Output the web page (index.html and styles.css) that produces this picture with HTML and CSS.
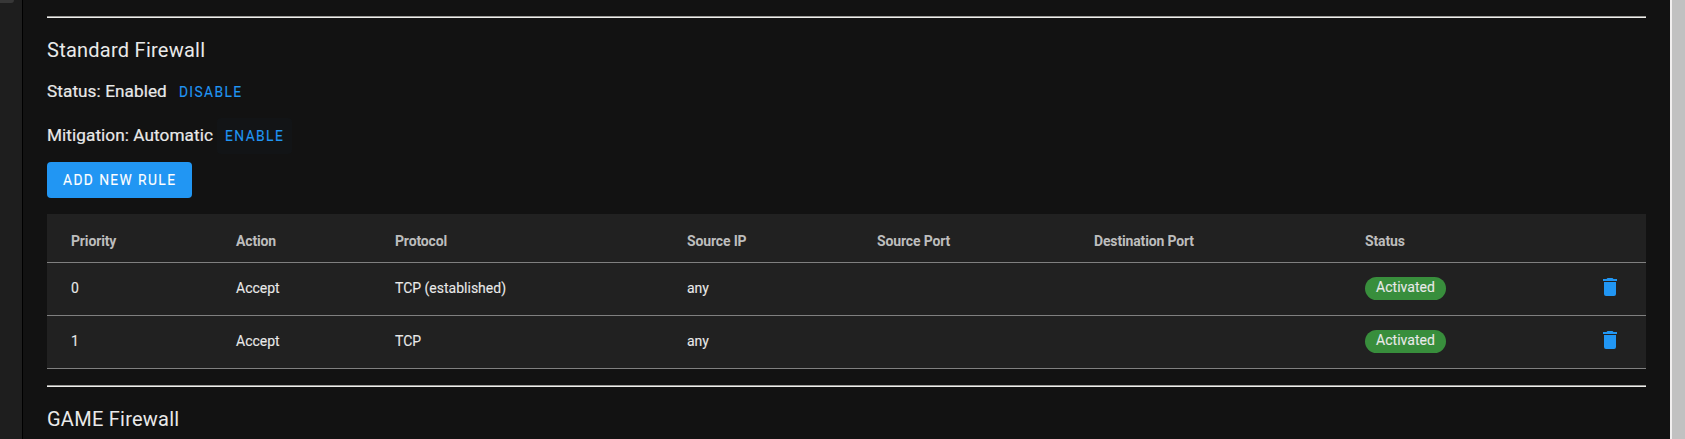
FILE: index.html
```html
<!DOCTYPE html>
<html lang="en">
<head>
<meta charset="utf-8">
<title>Firewall</title>
<link rel="stylesheet" href="styles.css">
</head>
<body>
<div class="app">
  <aside class="drawer"><div class="drawer-item"></div></aside>
  <main class="content">
    <hr class="divider">
    <h2 class="title">Standard Firewall</h2>
    <div class="setting"><span class="label">Status: Enabled</span><button class="btn btn-text">Disable</button></div>
    <div class="setting"><span class="label">Mitigation: Automatic</span><button class="btn btn-text active">Enable</button></div>
    <button class="btn btn-primary">Add new rule</button>
    <table class="rules">
      <colgroup><col class="c-priority"><col class="c-action"><col class="c-protocol"><col class="c-ip"><col class="c-sport"><col class="c-dport"><col class="c-status"></colgroup>
      <thead>
        <tr><th>Priority</th><th>Action</th><th>Protocol</th><th>Source IP</th><th>Source Port</th><th>Destination Port</th><th colspan="2">Status</th></tr>
      </thead>
      <tbody>
        <tr><td>0</td><td>Accept</td><td>TCP (established)</td><td>any</td><td></td><td></td><td><span class="chip">Activated</span></td><td class="remove"><svg class="icon" viewBox="0 0 24 24"><path d="M19 4h-3.500l-1-1h-5l-1 1H5v2h14M6 19a2 2 0 0 0 2 2h8a2 2 0 0 0 2-2V7H6v12Z"/></svg></td></tr>
        <tr><td>1</td><td>Accept</td><td>TCP</td><td>any</td><td></td><td></td><td><span class="chip">Activated</span></td><td class="remove"><svg class="icon" viewBox="0 0 24 24"><path d="M19 4h-3.500l-1-1h-5l-1 1H5v2h14M6 19a2 2 0 0 0 2 2h8a2 2 0 0 0 2-2V7H6v12Z"/></svg></td></tr>
      </tbody>
    </table>
    <hr class="divider">
    <h2 class="title">GAME Firewall</h2>
  </main>
  <div class="scrollbar"></div>
</div>
</body>
</html>
```
FILE: styles.css
```css
* { box-sizing: border-box; }
body { margin: 0; background: #121212; color: #e9e9e9; font-family: Roboto, sans-serif; }
.app { display: flex; height: 439px; overflow: hidden; }
.drawer { width: 23px; flex: none; background: #1e1e1e; border-right: 1px solid #000; }
.drawer-item { width: 14px; height: 3px; background: #373737; border-radius: 0 0 3px 0; }
.content { flex: 1; padding: 16px 24px 0; }
.divider { height: 2px; margin: 0; border: 0; border-top: 1px solid #9a9996; background: #eeeeec; }
.title { margin: 16px 0 0; font-size: 20px; font-weight: 400; line-height: 32px; letter-spacing: .25px; }
.setting { display: flex; align-items: center; height: 36px; margin-top: 8px; }
.label { font-size: 17.2px; line-height: 28px; padding-bottom: 3px; letter-spacing: .07px; -webkit-text-stroke: .2px; }
.btn { height: 36px; border: 0; border-radius: 4px; padding: 0 8px; background: none; font: 400 13.800px/36px Roboto, sans-serif; letter-spacing: 1.4px; text-transform: uppercase; -webkit-text-stroke: .1px; }
.btn-text { color: #2196f3; margin-left: 4px; }
.active { background: #121416; }
.btn-primary { display: block; margin-top: 8px; padding: 0 16px; width: 145px; background: #2196f3; color: #fff; white-space: nowrap; }
.rules { width: 1599px; margin: 16px 0; table-layout: fixed; border-collapse: separate; border-spacing: 0; background: #212121; font-size: 14px; line-height: 20px; }
.c-priority { width: 165px; }
.c-action { width: 159px; }
.c-protocol { width: 292px; }
.c-ip { width: 190px; }
.c-sport { width: 217px; }
.c-dport { width: 271px; }
.c-status { width: 150px; }
th, td { text-align: left; border-bottom: 1px solid #808080; padding: 0 24px; }
th { height: 49px; padding-top: 6px; color: #bdbdbd; font-weight: 700; letter-spacing: -.15px; }
td { height: 53px; padding-bottom: 2px; -webkit-text-stroke: .1px; }
.chip { display: block; width: 81px; height: 23px; border-radius: 12px; background: #388e3c; text-align: center; line-height: 20px; letter-spacing: .04px; }
.remove { padding-bottom: 4px; }
.icon { display: block; width: 24px; height: 24px; margin-left: auto; fill: #2196f3; }
.scrollbar { width: 15px; flex: none; background: #c1c1c1; border-left: 2px solid #f1efef; }
```
